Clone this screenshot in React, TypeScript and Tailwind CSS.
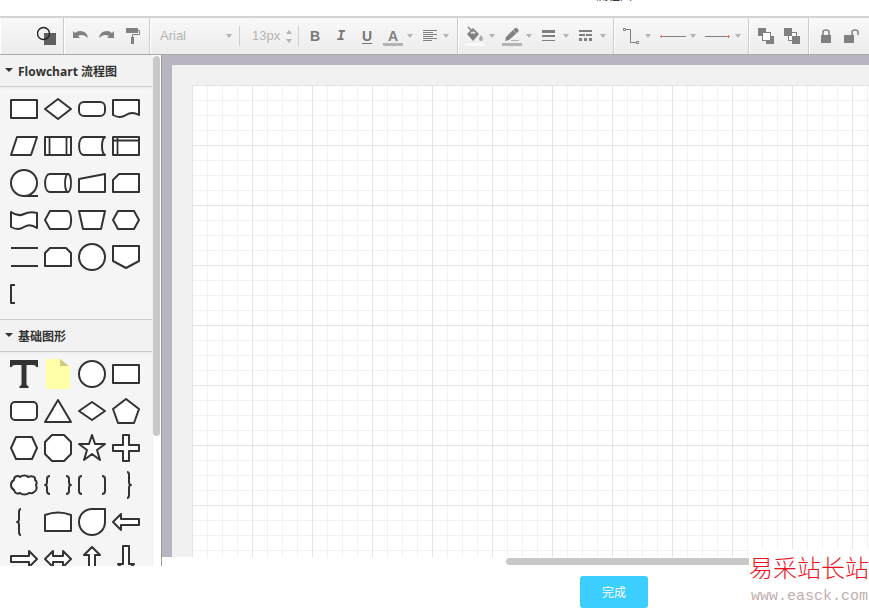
import React from 'react';

interface Shape {
  name: string;
  art: React.ReactNode;
}

// Every shape is drawn around its own centre point
const flowchartShapes: Shape[] = [
  { name: 'Process', art: <rect x="-13" y="-9" width="26" height="18" /> },
  { name: 'Decision', art: <path d="M-13 0 0-10 13 0 0 10Z" /> },
  { name: 'Terminator', art: <rect x="-13" y="-7" width="26" height="14" rx="5" /> },
  { name: 'Document', art: <path d="M-13-9H13V6Q6 2 0 6T-13 6Z" /> },
  { name: 'Data', art: <path d="M-7-9H13L7 9H-13Z" /> },
  {
    name: 'Predefined process',
    art: (
      <>
        <rect x="-13" y="-9" width="26" height="18" />
        <path d="M-8.5-9V9M8.5-9V9" strokeWidth="1.8" />
      </>
    ),
  },
  { name: 'Stored data', art: <path d="M13-9H-8C-14.5-9-14.5 9-8 9H13C9 7 9-7 13-9Z" /> },
  {
    name: 'Internal storage',
    art: (
      <>
        <rect x="-13" y="-9" width="26" height="18" />
        <path d="M-8.5-9V9M-13-5.5H13" strokeWidth="1.8" />
      </>
    ),
  },
  {
    name: 'Sequential data',
    art: (
      <>
        <circle r="13" />
        <path d="M0 13H14" />
      </>
    ),
  },
  {
    name: 'Direct data',
    art: (
      <>
        <path d="M10-9H-8C-14.500-9-14.500 9-8 9H10Z" />
        <ellipse cx="10" cy="0" rx="3" ry="9" strokeWidth="1.8" />
      </>
    ),
  },
  { name: 'Manual input', art: <path d="M-13-4 13-9V9H-13Z" /> },
  { name: 'Card', art: <path d="M-7-9H13V9H-13V-3Z" /> },
  { name: 'Paper tape', art: <path d="M-13-8Q-6-3 0-6T13-7V8Q6 3 0 7T-13 7Z" /> },
  { name: 'Display', art: <path d="M-13 0-8-9H9C14.5-9 14.5 9 9 9H-8Z" /> },
  { name: 'Manual operation', art: <path d="M-13-9H13L9 9H-9Z" /> },
  { name: 'Preparation', art: <path d="M-13 0-8-9H8L13 0 8 9H-8Z" /> },
  { name: 'Parallel mode', art: <path d="M-13-9H14M-13 9H14" /> },
  { name: 'Loop limit', art: <path d="M-13-4-8-9H8L13-4V9H-13Z" /> },
  { name: 'On-page reference', art: <circle r="13" /> },
  { name: 'Off-page reference', art: <path d="M-13-11H13V4L0 11-13 4Z" /> },
  { name: 'Annotation', art: <path d="M-9-9H-13V9H-9" fill="none" /> },
];

const basicShapes: Shape[] = [
  {
    name: 'Text',
    art: (
      <path
        d="M-14-14H14V-7H12Q12-9 9-9H2.500V10Q2.500 12 4.500 12V14H-4.500V12Q-2.500 12-2.500 10V-9H-9Q-12-9-12-7H-14Z"
        fill="#333"
        stroke="none"
      />
    ),
  },
  {
    name: 'Note',
    art: (
      <>
        <path d="M-12-15H2L12-7V15H-12Z" fill="#ffffaa" stroke="none" />
        <path d="M2-15 11-8H2Z" fill="#cccc88" stroke="none" />
      </>
    ),
  },
  { name: 'Circle', art: <circle r="13" /> },
  { name: 'Rectangle', art: <rect x="-13" y="-9" width="26" height="18" /> },
  { name: 'Rounded rectangle', art: <rect x="-13" y="-9" width="26" height="18" rx="4" /> },
  { name: 'Triangle', art: <path d="M0-11 13 11H-13Z" /> },
  { name: 'Diamond', art: <path d="M-13 0 0-9 13 0 0 9Z" /> },
  { name: 'Pentagon', art: <path d="M0-12 13-2 8 12H-8L-13-2Z" /> },
  { name: 'Hexagon', art: <path d="M-13 0-8-11H8L13 0 8 11H-8Z" /> },
  { name: 'Octagon', art: <path d="M-6-13H6L13-6V6L6 13H-6L-13 6V-6Z" /> },
  { name: 'Star', art: <path d="M0-13 3-4H13L5 2 8 12 0 6-8 12-5 2-13-4H-3Z" /> },
  { name: 'Cross', art: <path d="M-3-13H3V-3H13V3H3V13H-3V3H-13V-3H-3Z" /> },
  {
    name: 'Cloud',
    art: (
      <path d="M-10-5C-10-9-6-10-4-8C-2-10 3-10 4-8C8-10 12-8 11-5C13-4 13-2 12 0C13 2 13 6 10 7C8 9 6 8 5 8C3 10-2 10-4 8C-6 9-9 9-10 5C-14 3-14-3-10-5Z" />
    ),
  },
  {
    name: 'Braces',
    art: (
      <path
        d="M-8-9Q-11-9-11-6V-3Q-11 0-13 0Q-11 0-11 3V6Q-11 9-8 9M8-9Q11-9 11-6V-3Q11 0 13 0Q11 0 11 3V6Q11 9 8 9"
        fill="none"
      />
    ),
  },
  { name: 'Brackets', art: <path d="M-10-9Q-13-9-13-6V6Q-13 9-10 9M10-9Q13-9 13-6V6Q13 9 10 9" fill="none" /> },
  { name: 'Right brace', art: <path d="M1-13Q3-13 3-10V-3Q3 0 5 0Q3 0 3 3V10Q3 13 1 13" fill="none" /> },
  { name: 'Left brace', art: <path d="M-3-13Q-5-13-5-10V-3Q-5 0-7 0Q-5 0-5 3V10Q-5 13-3 13" fill="none" /> },
  { name: 'Arched box', art: <path d="M-13-7Q0-12 13-7V9H-13Z" /> },
  { name: 'Drop', art: <path d="M0-13H13V0A13 13 0 1 1 0-13Z" /> },
  { name: 'Left arrow', art: <path d="M-13 0-5-8V-3H13V3H-5V8Z" /> },
  { name: 'Right arrow', art: <path d="M13 0 5-8V-3H-13V3H5V8Z" /> },
  { name: 'Double arrow', art: <path d="M-13 0-5-8V-3H5V-8L13 0 5 8V3H-5V8Z" /> },
  { name: 'Up arrow', art: <path d="M0-12-8-4H-3V14H3V-4H8Z" /> },
  { name: 'Down arrow', art: <path d="M0 13-8 5H-3V-13H3V5H8Z" /> },
];

const ShapePanel: React.FC<{ title: string; shapes: Shape[]; className?: string }> = ({ title, shapes, className }) => (
  <section className={className}>
    <h3>
      <button className="flex h-8 w-full items-center gap-[5px] border-b border-[#ccc] bg-[#f2f2f2] pt-[2px] pl-[5px] text-left text-xs font-bold text-[#333] shadow-xs">
        <svg className="mb-1 h-2 w-2 shrink-0" viewBox="0 0 8 8">
          <path d="M0 2H8L4 6Z" fill="#333" />
        </svg>
        {title}
      </button>
    </h3>
    <div className="flex flex-wrap pt-1 pb-[6px] pl-[7px]">
      {shapes.map((shape) => (
        <button key={shape.name} aria-label={shape.name} className="h-[37px] w-[34px]">
          <svg
            className="h-[37px] w-[34px]"
            viewBox="-17 -18 34 37"
            fill="#fff"
            stroke="#333"
            strokeWidth="2"
            strokeLinejoin="round"
          >
            {shape.art}
          </svg>
        </button>
      ))}
    </div>
  </section>
);

const Caret: React.FC = () => (
  <svg className="h-1 w-[6px] shrink-0" viewBox="0 0 6 4">
    <path d="M0 0H6L3 4Z" fill="#b4b4b4" />
  </svg>
);

const Group: React.FC<{ className?: string; children: React.ReactNode }> = ({ className = '', children }) => (
  <div className={`flex shrink-0 items-center border-r border-l border-r-[#cbcbcb] border-l-white ${className}`}>
    {children}
  </div>
);

const Divider: React.FC = () => <div className="h-5 w-px shrink-0 bg-[#cfcfcf]" />;

const Tool: React.FC<{ name: string; children: React.ReactNode }> = ({ name, children }) => (
  <button aria-label={name} className="flex h-7 w-[26px] shrink-0 items-center justify-center">
    <svg className="h-5 w-5" viewBox="0 0 20 20" fill="#808080">
      {children}
    </svg>
  </button>
);

const MenuTool: React.FC<{ name: string; children: React.ReactNode }> = ({ name, children }) => (
  <button aria-label={name} className="flex h-7 w-[37px] shrink-0 items-center gap-1 pl-[6px]">
    <svg className="h-5 w-5 shrink-0" viewBox="0 0 20 20" fill="#808080">
      {children}
    </svg>
    <Caret />
  </button>
);

const ArrowTool: React.FC<{ name: string; children: React.ReactNode }> = ({ name, children }) => (
  <button aria-label={name} className="flex h-7 w-[45px] shrink-0 items-center gap-1 pl-[6px]">
    <svg className="h-5 w-7 shrink-0" viewBox="0 0 28 20" fill="#808080">
      {children}
    </svg>
    <Caret />
  </button>
);

const Toolbar: React.FC = () => (
  <div className="flex h-[39px] shrink-0 overflow-hidden border-t-2 border-b border-t-[#d4d4d4] border-b-[#a8a8a8] bg-linear-to-b from-[#f8f8f8] to-[#ececec]">
    <Group className="w-16 justify-end pr-[3px]">
      <Tool name="Shapes">
        <rect x="7" y="7" width="12" height="12" fill="#5f5f5f" />
        <circle cx="6.5" cy="7.5" r="6" fill="none" stroke="#222" strokeWidth="1.4" />
      </Tool>
    </Group>
    <Group className="w-[86px] pl-[3px]">
      <Tool name="Undo">
        <path d="M2 5V12H9L7 10Q12 7 17 12Q16 5 9 5Q6 5 4 7Z" />
      </Tool>
      <Tool name="Redo">
        <path d="M17 5V12H10L12 10Q7 7 2 12Q3 5 10 5Q13 5 15 7Z" />
      </Tool>
      <Tool name="Format painter">
        <rect x="3" y="2" width="12" height="5" />
        <path d="M15 4.500H16.500V8.500H9.500V11" fill="none" stroke="#808080" />
        <rect x="8" y="11" width="3" height="7" />
      </Tool>
    </Group>
    <Group className="w-[308px]">
      <label className="flex w-[88px] items-center pl-[9px]">
        <select
          aria-label="Font family"
          className="w-[66px] appearance-none bg-transparent font-['Liberation_Sans',sans-serif] text-[13px] text-[#b4b4b4] outline-none"
        >
          <option>Arial</option>
        </select>
        <Caret />
      </label>
      <Divider />
      <div className="flex w-[58px] items-center pl-3">
        <input
          aria-label="Font size"
          defaultValue="13px"
          className="w-[34px] bg-transparent font-['Liberation_Sans',sans-serif] text-[13px] text-[#b4b4b4] outline-none"
        />
        <div className="flex flex-col gap-[5px]">
          <button aria-label="Increase font size" className="rotate-180">
            <Caret />
          </button>
          <button aria-label="Decrease font size">
            <Caret />
          </button>
        </div>
      </div>
      <Divider />
      <div className="flex items-center pl-[3px] text-[14px] font-bold text-[#777]">
        <button className="h-7 w-[26px] font-['Liberation_Sans',sans-serif]">B</button>
        <button className="h-7 w-[26px] font-['Liberation_Mono',monospace] italic">I</button>
        <button className="h-7 w-[26px] font-['Liberation_Sans',sans-serif] underline decoration-1 underline-offset-2">
          U
        </button>
      </div>
      <button
        aria-label="Font color"
        className="flex h-7 w-[33px] shrink-0 items-center gap-1 pl-[3px] font-['Liberation_Sans',sans-serif] text-[14px] font-bold text-[#808080]"
      >
        <span className="h-5 w-5 shrink-0 border-b-[3px] border-[#b4b4b4] text-center leading-5">A</span>
        <Caret />
      </button>
      <MenuTool name="Text align">
        <path d="M4 4H18V5H4ZM4 6H14V7H4ZM4 8H18V9H4ZM4 10H14V11H4ZM4 12H18V13H4ZM4 14H13V15H4Z" />
      </MenuTool>
    </Group>
    <Group className="w-[156px]">
      <MenuTool name="Fill style">
        <path d="M2 8 8 2 14 8 8 15Z" />
        <path d="M5 7.500 8 4.500 11 7.500Z" fill="#f2f2f2" />
        <path d="M3 1 8 6" fill="none" stroke="#808080" strokeWidth="1.5" />
        <path d="M16 9Q18 12 18 13Q18 15 16 15Q14 15 14 13Q14 12 16 9Z" fill="#aaa" />
        <rect x="0" y="17" width="20" height="3" fill="#fafafa" />
      </MenuTool>
      <MenuTool name="Line color">
        <path d="M3 15 4 11 12 3Q14 1 16 3Q17 5 16 6L7 14Z" />
        <path d="M11 4 15 8" stroke="#ddd" strokeWidth=".7" />
        <path d="M9 14H17V15H9Z" fill="#b4b4b4" />
        <rect x="0" y="17" width="20" height="3" fill="#b4b4b4" />
      </MenuTool>
      <MenuTool name="Line width">
        <path d="M3 4H16V7H3ZM3 9H16V11H3ZM3 14H16V15H3Z" />
      </MenuTool>
      <MenuTool name="Line style">
        <path d="M3 4H16V6H3ZM3 8H9V10H3ZM10 8H16V10H10ZM3 12H6V15H3ZM8 12H11V15H8ZM13 12H16V15H13Z" />
      </MenuTool>
    </Group>
    <Group className="w-[135px]">
      <MenuTool name="Connector type">
        <path d="M5 3.500H9.500V16.500H15" fill="none" stroke="#808080" />
        <path d="M2.500 2.500H4.500V4.500H2.500ZM15.500 15.500H17.500V17.500H15.500Z" fill="none" stroke="#808080" />
      </MenuTool>
      <ArrowTool name="Begin arrow">
        <path d="M4 10H28V11H4Z" />
        <path d="M2 10H5V11H2ZM3 9H4V12H3Z" fill="#ff7070" />
      </ArrowTool>
      <ArrowTool name="End arrow">
        <path d="M2 10H26V11H2Z" />
        <path d="M24 10H27V11H24ZM25 9H26V12H25Z" fill="#ff7070" />
      </ArrowTool>
    </Group>
    <Group className="w-[60px] pl-[3px]">
      <Tool name="Bring to front">
        <path d="M2 2H10V10H2ZM10 10H18V18H10Z" />
        <rect x="6.5" y="6.5" width="8" height="8" fill="#fff" stroke="#808080" />
      </Tool>
      <Tool name="Send to back">
        <rect x="6.5" y="6.5" width="8" height="8" fill="#fff" stroke="#808080" />
        <path d="M2 2H10V10H2ZM10 10H18V18H10Z" />
      </Tool>
    </Group>
    <div className="flex shrink-0 items-center border-l border-white pl-[3px]">
      <Tool name="Lock">
        <path d="M5 9H15V17H5Z" />
        <path d="M7 9V6Q7 4 10 4Q13 4 13 6V9" fill="none" stroke="#808080" strokeWidth="1.5" />
      </Tool>
      <Tool name="Unlock">
        <path d="M2 9H12V17H2Z" />
        <path d="M10 10V6Q10 4 13 4Q16 4 16 6V9" fill="none" stroke="#808080" strokeWidth="1.5" />
      </Tool>
    </div>
  </div>
);

const Grid: React.FC = () => (
  <svg className="block h-full w-full">
    <defs>
      <pattern id="grid" width="60" height="60" patternUnits="userSpaceOnUse">
        <path
          d="M15.500 0V60M30.500 0V60M45.500 0V60M0 15.500H60M0 30.500H60M0 45.500H60"
          fill="none"
          stroke="#f2f2f2"
        />
        <path d="M.5 0V60M0 .5H60" fill="none" stroke="#e3e3e3" />
      </pattern>
    </defs>
    <rect width="100%" height="100%" fill="#fff" />
    <rect width="100%" height="100%" fill="url(#grid)" />
  </svg>
);

const App: React.FC = () => {
  return (
    <div className="relative flex h-screen flex-col overflow-hidden bg-white font-['Open_Sans','Noto_Sans_CJK_SC',sans-serif]">
      <header className="flex h-4 shrink-0 justify-center overflow-hidden pl-[359px]">
        <h1 className="-mt-3 text-xs leading-4 text-black">流程图</h1>
      </header>

      <Toolbar />

      <div className="flex min-h-0 flex-1">
        <aside className="flex shrink-0 border-r border-[#999]">
          <div className="w-[152px] overflow-hidden bg-[#f5f5f5]">
            <ShapePanel title="Flowchart 流程图" shapes={flowchartShapes} />
            <ShapePanel title="基础图形" shapes={basicShapes} className="border-t border-[#ccc]" />
          </div>
          <div className="w-[9px] border-l border-[#f0f0f0] bg-white pt-px pr-px">
            <div className="h-[380px] rounded-full bg-[#c8c8c8]" />
          </div>
        </aside>

        <main className="flex min-w-0 flex-1 flex-col">
          <div className="min-h-0 flex-1 bg-[#b8b4c0] pt-[10px] pl-[10px]">
            <div className="h-full bg-[#f1f1f1] pt-5 pl-5">
              <Grid />
            </div>
          </div>
          <div className="flex h-[9px] shrink-0 justify-end py-px">
            <div className="w-[363px] rounded-l-full bg-[#c8c8c8]" />
          </div>
        </main>
      </div>

      <footer className="flex h-[43px] shrink-0 justify-center pt-[10px] pl-[359px]">
        <button className="h-8 w-[68px] rounded-[3px] bg-[#3bceff] pt-[2px] text-xs text-white">完成</button>
      </footer>

      {/* Site mark over the lower right corner */}
      <div className="absolute right-0 bottom-0 w-[120px] overflow-hidden bg-white whitespace-nowrap">
        <p className="font-['Noto_Sans_CJK_SC',sans-serif] text-[24px] leading-9 font-light text-[#f01020]">易采站长站</p>
        <p className="pl-[2px] font-['Liberation_Mono',monospace] text-[15px] leading-6 text-[#bfaeae]">www.easck.com</p>
      </div>
    </div>
  );
};

export default App;
